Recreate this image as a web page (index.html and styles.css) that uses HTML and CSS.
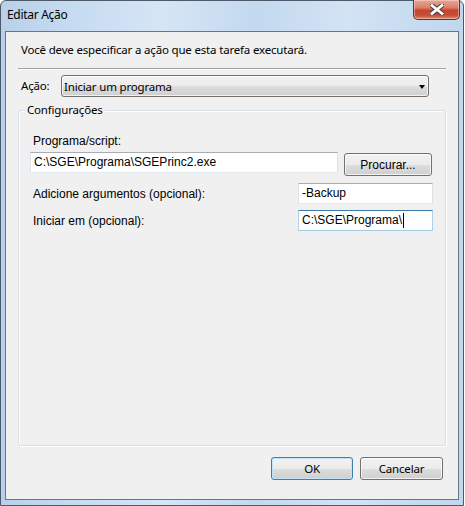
FILE: index.html
```html
<!DOCTYPE html>
<html lang="pt">
<head>
<meta charset="utf-8">
<title>Editar Ação</title>
<link rel="stylesheet" href="styles.css">
</head>
<body>
<div class="window">
  <div class="titlebar">
    <span class="title">Editar Ação</span>
    <div class="close">
      <svg width="14" height="11" viewBox="0 0 14 11">
        <path d="M2 1.5 L12 9.5 M12 1.5 L2 9.5" stroke="#4a3a38" stroke-width="4.8" stroke-linecap="square" fill="none"/>
        <path d="M2 1.5 L12 9.5 M12 1.5 L2 9.5" stroke="#ffffff" stroke-width="2.8" stroke-linecap="square" fill="none"/>
      </svg>
    </div>
  </div>
  <div class="client">
    <p class="intro seg">Você deve especificar a ação que esta tarefa executará.</p>
    <div class="sep"></div>
    <div class="action-row">
      <span class="seg label-acao">Ação:</span>
      <div class="combo seg"><span>Iniciar um programa</span><span class="arrow"></span></div>
    </div>
    <div class="group">
      <div class="legend seg">Configurações</div>
      <div class="ms lbl-prog">Programa/script:</div>
      <div class="row-prog">
        <div class="input ms w-prog">C:\SGE\Programa\SGEPrinc2.exe</div>
        <div class="btn ms btn-browse">Procurar...</div>
      </div>
      <div class="row-arg first">
        <span class="ms lbl">Adicione argumentos (opcional):</span>
        <div class="input ms w-small">-Backup</div>
      </div>
      <div class="row-arg second">
        <span class="ms lbl">Iniciar em (opcional):</span>
        <div class="input ms w-small focus">C:\SGE\Programa\<span class="caret"></span></div>
      </div>
    </div>
    <div class="buttons">
      <div class="btn seg default btn-ok">OK</div>
      <div class="btn seg btn-cancel">Cancelar</div>
    </div>
  </div>
</div>
</body>
</html>
```

FILE: styles.css
```css
html, body {
  margin: 0;
  padding: 0;
  background: #ffffff;
}

.seg {
  font-family: "Noto Sans", "DejaVu Sans", sans-serif;
  font-size: 11.5px;
  letter-spacing: -0.18px;
}

.ms {
  font-family: "Liberation Sans", Arial, sans-serif;
  font-size: 12px;
}

.window {
  width: 464px;
  height: 506px;
  box-sizing: border-box;
  border: 1px solid #4e5a68;
  border-radius: 6px 6px 0 0;
  background: linear-gradient(to right, #b8d0ea 0%, #c6dbf1 15%, #d5e5f5 35%, #c4d9ef 55%, #d2e3f4 75%, #c1d7ee 100%);
  color: #000;
}

.titlebar {
  height: 30px;
  display: flex;
  align-items: flex-start;
}

.title {
  font-family: "Noto Sans", "DejaVu Sans", sans-serif;
  font-size: 12px;
  letter-spacing: -0.3px;
  line-height: 16px;
  margin-top: 6px;
  margin-left: 6px;
}

.close {
  margin-left: auto;
  margin-right: 3px;
  margin-top: -1px;
  width: 47px;
  height: 20px;
  box-sizing: border-box;
  border: 1px solid #6e2d24;
  border-top: none;
  border-radius: 0 0 5px 5px;
  background: linear-gradient(to bottom, #e6a896 0%, #d98069 40%, #c3452f 55%, #c84c36 80%, #dd8a6d 100%);
  box-shadow: inset 0 0 0 1px rgba(255, 220, 210, 0.5);
  display: flex;
  align-items: center;
  justify-content: center;
}

.close svg {
  display: block;
}

.client {
  margin: 0 4px;
  height: 469px;
  box-sizing: border-box;
  border: 1px solid #6b7580;
  background: #f0f0f0;
}

.intro {
  margin: 10px 0 0 0;
  padding-left: 15px;
  line-height: 16px;
}

.sep {
  margin: 10px 12px 0 12px;
  height: 0;
  border-top: 1px solid #a0a0a0;
  border-bottom: 1px solid #ffffff;
}

.action-row {
  margin-top: 5px;
  display: flex;
  align-items: center;
  height: 22px;
}

.label-acao {
  width: 40px;
  padding-left: 15px;
  line-height: 16px;
}

.combo {
  width: 368px;
  height: 22px;
  box-sizing: border-box;
  border: 1px solid #707070;
  border-radius: 3px;
  background: linear-gradient(to bottom, #f2f2f2 0%, #ebebeb 50%, #dddddd 51%, #cfcfcf 100%);
  box-shadow: inset 0 0 0 1px rgba(255, 255, 255, 0.7);
  display: flex;
  align-items: center;
  padding-left: 2px;
  padding-right: 3px;
}

.combo span:first-child {
  flex: 1;
}

.arrow {
  width: 0;
  height: 0;
  border-left: 3.5px solid transparent;
  border-right: 3.5px solid transparent;
  border-top: 4px solid #000;
  margin-top: 1px;
}

.group {
  margin: 13px 12px 0 12px;
  height: 336px;
  box-sizing: border-box;
  border: 1px solid #d5dfe5;
  border-radius: 3px;
  box-shadow: inset 1px 1px 0 #ffffff, 1px 1px 0 #ffffff;
}

.legend {
  width: fit-content;
  margin: -9px 0 0 6px;
  padding: 0 2px;
  background: #f0f0f0;
  line-height: 16px;
}

.lbl-prog {
  margin: 15px 0 0 14px;
  line-height: 16px;
}

.row-prog {
  margin-top: 3px;
  display: flex;
  align-items: flex-start;
}

.input {
  height: 21px;
  box-sizing: border-box;
  background: #ffffff;
  border: 1px solid #e3e9ef;
  border-top-color: #abadb3;
  border-left-color: #e2e3ea;
  border-right-color: #dbdfe6;
  padding-left: 3px;
  line-height: 19px;
  white-space: nowrap;
  display: flex;
  align-items: center;
}

.w-prog {
  margin-left: 11px;
  width: 308px;
}

.btn {
  height: 23px;
  box-sizing: border-box;
  border: 1px solid #707070;
  border-radius: 3px;
  background: linear-gradient(to bottom, #f2f2f2 0%, #ebebeb 50%, #dddddd 51%, #cfcfcf 100%);
  box-shadow: inset 0 0 0 1px rgba(255, 255, 255, 0.75);
  display: flex;
  align-items: center;
  justify-content: center;
}

.btn-browse {
  margin-top: 1px;
  margin-left: 6px;
  width: 88px;
}

.row-arg {
  display: flex;
  align-items: center;
}

.row-arg.first {
  margin-top: 7px;
}

.row-arg.second {
  margin-top: 6px;
}

.lbl {
  padding-left: 14px;
  line-height: 16px;
}

.w-small {
  margin-left: auto;
  margin-right: 12px;
  width: 135px;
}

.input.focus {
  border-color: #a4c9e3;
  border-top-color: #3d7bad;
  border-left-color: #b5cfe7;
  border-right-color: #b5cfe7;
}

.caret {
  display: inline-block;
  width: 1px;
  height: 15px;
  background: #000;
  margin-left: 1px;
}

.buttons {
  margin-top: 11px;
  display: flex;
  justify-content: flex-end;
  gap: 7px;
  padding-right: 15px;
}

.btn-ok {
  width: 82px;
}

.btn-cancel {
  width: 83px;
}

.btn.default {
  border-color: #3c7fb1;
  box-shadow: inset 0 0 0 1px #c6e4f7;
}
```
